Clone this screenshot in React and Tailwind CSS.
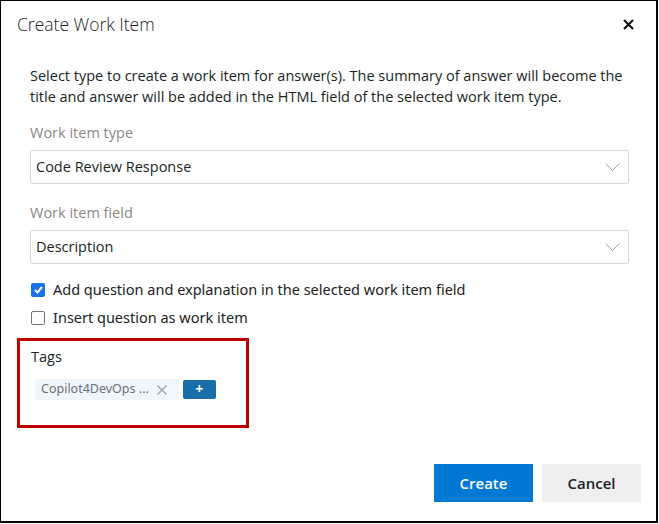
import React from 'react'

const Chevron = () => (
  <svg width="15" height="9" viewBox="0 0 15 9" fill="none" stroke="#a6a6a6" strokeWidth="1">
    <path d="M0.5 0.5 L7.5 7.5 L14.5 0.5" />
  </svg>
)

const Select = ({ value }) => (
  <div className="flex items-center justify-between h-[34px] border border-[#d6d6d6] rounded-[2px] pl-[5px] pr-[8px]">
    <span className="text-[14.5px] text-[#201f1e]">{value}</span>
    <Chevron />
  </div>
)

const Label = ({ children }) => (
  <div className="text-[14.5px] text-[#8a8886] leading-[20px] mb-[7px]">{children}</div>
)

const CheckRow = ({ checked, label }) => (
  <label className="flex items-center gap-[8px] h-[20px]">
    {checked ? (
      <span className="w-[14px] h-[14px] rounded-[2px] bg-[#1a73e8] flex items-center justify-center">
        <svg width="9" height="8" viewBox="0 0 9 8" fill="none" stroke="white" strokeWidth="2">
          <path d="M1 4 L3.5 6.5 L8 1" />
        </svg>
      </span>
    ) : (
      <span className="w-[14px] h-[14px] rounded-[2px] border border-[#767676] bg-white" />
    )}
    <span className="text-[14.5px] text-[#222] font-['Noto_Sans',sans-serif]">{label}</span>
  </label>
)

export default function App() {
  return (
    <div className="w-[659px] h-[524px] bg-white font-['Open_Sans',sans-serif]">
      <div className="h-[523px] w-[658px] border-l border-t border-r-2 border-b-2 border-black flex flex-col">
        <div className="flex items-center justify-between pl-[16px] pr-[22px] pt-[11px]">
          <h1 className="text-[17.5px] font-light text-[#201f1e] leading-[24px]">Create Work Item</h1>
          <svg width="11" height="11" viewBox="0 0 11 11" stroke="#111" strokeWidth="2.2">
            <path d="M1 1 L10 10 M10 1 L1 10" />
          </svg>
        </div>

        <div className="pl-[29px] pr-[27px] pt-[29px]">
          <p className="text-[14.5px] leading-[21px] text-[#201f1e]">
            Select type to create a work item for answer(s). The summary of answer will become the title and answer will be added in the HTML field of the selected work item type.
          </p>

          <div className="mt-[16px]">
            <Label>Work item type</Label>
            <Select value="Code Review Response" />
          </div>

          <div className="mt-[19px]">
            <Label>Work item field</Label>
            <Select value="Description" />
          </div>

          <div className="mt-[16px] flex flex-col gap-[8px] pl-[1px]">
            <CheckRow checked label="Add question and explanation in the selected work item field" />
            <CheckRow label="Insert question as work item" />
          </div>
        </div>

        <div className="ml-[16px] mt-[10px] w-[232px] h-[90px] border-[3px] border-[#c00000] pl-[11px] pt-[6px]">
          <div className="text-[14.5px] text-[#201f1e] leading-[20px]">Tags</div>
          <div className="flex items-center gap-[4px] mt-[12px] ml-[4px]">
            <div className="flex items-center h-[21px] bg-[#eff6fc] pl-[6px] pr-[12px] gap-[8px]">
              <span className="text-[12.5px] text-[#707070] font-['Noto_Sans',sans-serif]">Copilot4DevOps ...</span>
              <svg width="10" height="10" viewBox="0 0 10 10" stroke="#a0a0a0" strokeWidth="1.2">
                <path d="M0.5 0.5 L9.5 9.5 M9.5 0.5 L0.5 9.5" />
              </svg>
            </div>
            <div className="w-[33px] h-[19px] bg-[#1a6ea8] rounded-[2px] flex items-center justify-center text-white text-[14px] leading-none font-bold -mt-[1px]">+</div>
          </div>
        </div>

        <div className="mt-auto flex justify-end gap-[9px] pr-[15px] pb-[19px]">
          <button className="w-[99px] h-[38px] bg-[#0078d4] text-white text-[15px] font-semibold">Create</button>
          <button className="w-[99px] h-[38px] bg-[#efefef] text-[#201f1e] text-[15px] font-semibold">Cancel</button>
        </div>
      </div>
    </div>
  )
}
